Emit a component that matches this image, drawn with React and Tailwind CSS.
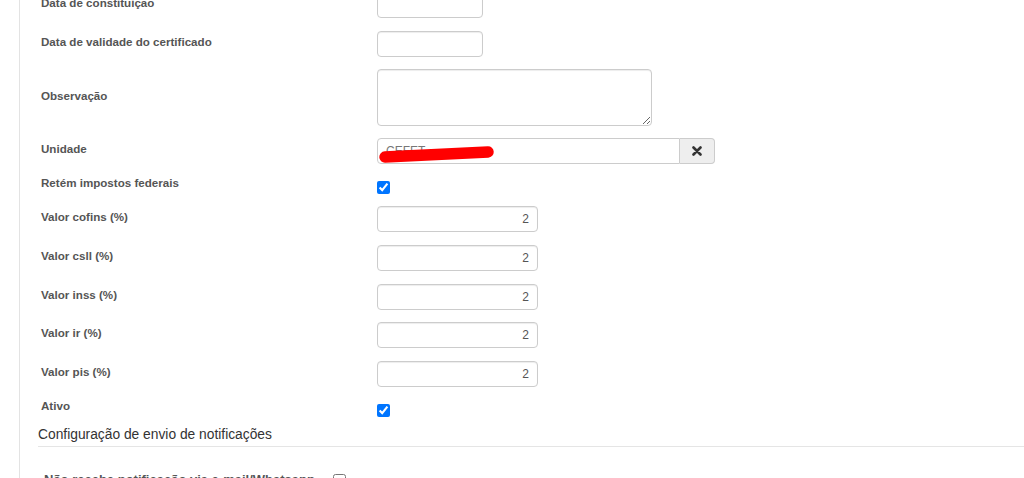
import React from 'react';

const font = { fontFamily: '"Liberation Sans", Arial, sans-serif' };

const Label = ({ children, shift = 'pb-[4px]' }) => (
  <div className={`w-[336px] shrink-0 text-[11.6px] font-bold text-[#555] ${shift}`}>{children}</div>
);

const TextInput = ({ className = '', value = '' }) => (
  <input
    readOnly
    value={value}
    className={`h-[26px] rounded-[4px] border border-[#ccc] bg-white px-[8px] text-[12px] text-[#555] shadow-[inset_0_1px_1px_rgba(0,0,0,0.075)] outline-none ${className}`}
  />
);

const Check = ({ checked = true }) => (
  <input type="checkbox" defaultChecked={checked} className="m-0 h-[13px] w-[13px]" />
);

const taxes = ['Valor cofins (%)', 'Valor csll (%)', 'Valor inss (%)', 'Valor ir (%)', 'Valor pis (%)'];

export default function App() {
  return (
    <div className="min-h-[478px] overflow-hidden bg-white pl-[19px]" style={font}>
      <div className="-mt-[8px] min-h-[560px] border-l border-[#e3e3e3] pl-[18px]">
        <div className="pl-[3px]">
          <div className="flex h-[26px] items-center">
            <Label>Data de constituição</Label>
            <TextInput className="w-[106px]" />
          </div>

          <div className="mt-[13px] flex h-[26px] items-center">
            <Label>Data de validade do certificado</Label>
            <TextInput className="w-[106px]" />
          </div>

          <div className="mt-[12px] flex h-[57px] items-center">
            <Label>Observação</Label>
            <textarea
              readOnly
              className="h-[57px] w-[275px] rounded-[4px] border border-[#ccc] bg-white shadow-[inset_0_1px_1px_rgba(0,0,0,0.075)] outline-none"
            />
          </div>

          <div className="mt-[12px] flex h-[26px] items-center">
            <Label>Unidade</Label>
            <div className="relative flex h-[26px]">
              <input
                readOnly
                value="CEFET"
                className="h-[26px] w-[303px] rounded-l-[4px] border border-[#ccc] bg-white px-[8px] text-[12px] text-[#777] outline-none"
              />
              <button className="flex h-[26px] w-[35px] items-center justify-center rounded-r-[4px] border border-l-0 border-[#ccc] bg-[#eee] text-[#333]">
                <svg width="10" height="10" viewBox="0 0 10 10">
                  <path d="M1.5 1.5 L8.5 8.5 M8.5 1.5 L1.5 8.5" stroke="#333" strokeWidth="2.6" strokeLinecap="round" />
                </svg>
              </button>
              <svg className="absolute left-[1px] top-[3px]" width="120" height="24" viewBox="0 0 120 24">
                <path d="M7 16 L110 11" stroke="#ff0000" strokeWidth="11.5" strokeLinecap="round" />
              </svg>
            </div>
          </div>

          <div className="mt-[13px] flex h-[20px] items-center">
            <Label shift="pb-[8px]">Retém impostos federais</Label>
            <Check />
          </div>

          {taxes.map((t, i) => (
            <div key={t} className={`${i === 0 ? 'mt-[9px]' : i === 3 ? 'mt-[12px]' : 'mt-[13px]'} flex h-[26px] items-center`}>
              <Label>{t}</Label>
              <TextInput className="w-[161px] text-right" value="2" />
            </div>
          ))}

          <div className="mt-[13px] flex h-[20px] items-center">
            <Label shift="pb-[8px]">Ativo</Label>
            <Check />
          </div>
        </div>

        <div className="mt-[6px] border-b border-[#e5e5e5] pb-[2px] text-[13.8px] leading-[18px] text-[#333]">
          Configuração de envio de notificações
        </div>

        <div className="mt-[24px] flex items-center pl-[6px]">
          <div className="w-[289px] shrink-0 text-[13px] font-bold leading-[18px] text-[#555]">Não recebe notificação via e-mail/Whatsapp</div>
          <Check checked={false} />
        </div>
      </div>
    </div>
  );
}
